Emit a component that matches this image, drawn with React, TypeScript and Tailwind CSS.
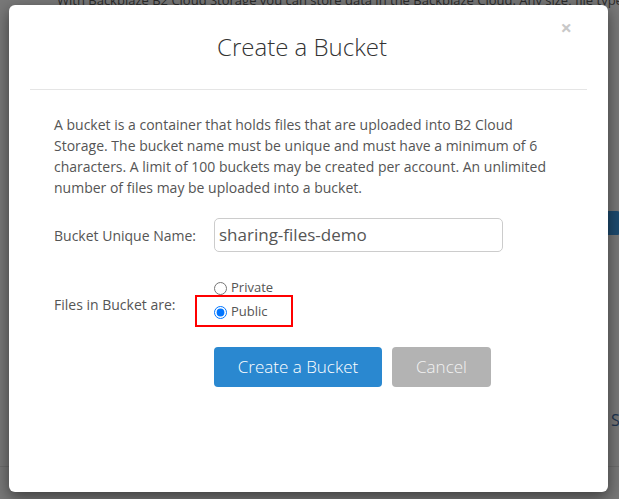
import React from "react";

export default function App() {
  return (
    <div
      className="relative w-[619px] h-[499px] overflow-hidden bg-[#787878]"
      style={{ fontFamily: '"Open Sans", "Liberation Sans", sans-serif' }}
    >
      {/* page behind the overlay */}
      <div className="flex flex-col">
        <p className="-mt-[9px] pl-[57px] whitespace-nowrap text-[13px] leading-[18px] text-[#2c2c2c]">
          With Backblaze B2 Cloud Storage you can store data in the Backblaze Cloud. Any size, file type
        </p>
        <div className="mt-[202px] ml-[560px] h-[24px] w-[60px] rounded-[3px] bg-[#1d4a6e]" />
        <div className="mt-[174px] ml-[611px] text-[16px] leading-[22px] whitespace-nowrap text-[#1e3550]">Sr</div>
        <div className="mt-[35px] h-px bg-[#6c6c6c]" />
      </div>

      {/* modal */}
      <div className="absolute left-[9px] top-[5px] w-[599px] h-[487px] rounded-[6px] bg-white shadow-[0_5px_15px_rgba(0,0,0,0.5)] flex flex-col">
        <div className="relative mx-[21px] h-[85px] border-b border-[#e5e5e5] flex items-center justify-center pr-[13px]">
          <h1 className="text-[24px] font-light text-[#333] leading-none">Create a Bucket</h1>
          <span className="absolute right-[15px] top-[13px] text-[20px] font-bold leading-none text-[#c8c8c8]">×</span>
        </div>

        <div className="px-[45px] pt-[24px] flex flex-col">
          <p className="text-[14px] leading-[21px] text-[#555]">
            A bucket is a container that holds files that are uploaded into B2 Cloud Storage. The bucket name must be unique and must have a minimum of 6 characters. A limit of 100 buckets may be created per account. An unlimited number of files may be uploaded into a bucket.
          </p>

          <div className="mt-[20px] flex items-center">
            <label className="w-[160px] text-[14px] text-[#555]">Bucket Unique Name:</label>
            <div className="h-[34px] w-[289px] rounded-[5px] border border-[#ccc] flex items-center pl-[4px] text-[17px] text-[#555]">
              sharing-files-demo
            </div>
          </div>

          <div className="mt-[25px] flex items-center">
            <label className="w-[160px] pt-[8px] text-[14px] text-[#555]">Files in Bucket are:</label>
            <div className="flex flex-col">
              <label className="flex items-center h-[22px] text-[13px] text-[#555]">
                <input type="radio" name="vis" className="m-0 mr-[4px] h-[13px] w-[13px]" />
                Private
              </label>
              <div className="relative mt-[2px]">
                <div className="absolute -left-[19px] -top-[6px] h-[32px] w-[98px] border-2 border-[#f00]" />
                <label className="flex items-center h-[22px] text-[13px] text-[#555]">
                  <input type="radio" name="vis" defaultChecked className="m-0 mr-[4px] h-[13px] w-[13px]" />
                  Public
                </label>
              </div>
            </div>
          </div>

          <div className="mt-[24px] ml-[160px] flex gap-[10px]">
            <button className="h-[40px] w-[168px] rounded-[4px] bg-[#2a88d0] text-[17px] font-light text-white">
              Create a Bucket
            </button>
            <button className="h-[40px] w-[99px] rounded-[4px] bg-[#b3b3b3] text-[17px] font-light text-[#f2f2f2]">
              Cancel
            </button>
          </div>
        </div>
      </div>
    </div>
  );
}
